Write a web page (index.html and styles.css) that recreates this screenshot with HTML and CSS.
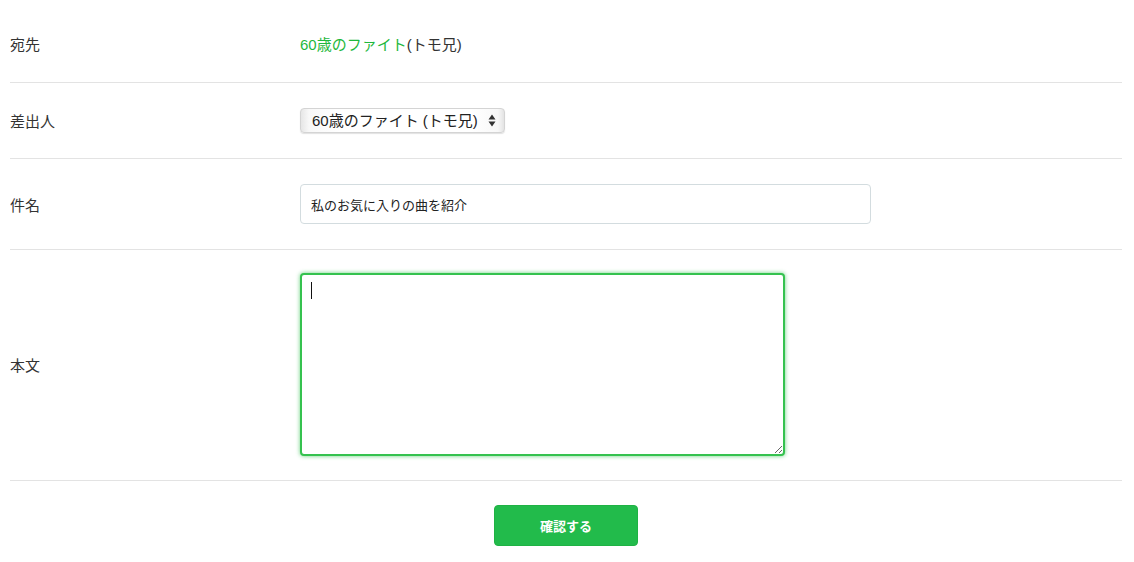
FILE: index.html
```html
<!DOCTYPE html>
<html lang="ja">
<head>
<meta charset="utf-8">
<title>メッセージ作成</title>
<link rel="stylesheet" href="styles.css">
</head>
<body>
<div class="form">
  <div class="row row-first">
    <div class="label">宛先</div>
    <div class="value"><span class="to-name">60歳のファイト</span>(トモ兄)</div>
  </div>
  <div class="row">
    <div class="label">差出人</div>
    <div class="value">
      <div class="select-wrap">
        <select class="select">
          <option>60歳のファイト (トモ兄)</option>
        </select>
        <svg class="select-arrows" width="8" height="13" viewBox="0 0 8 13"><path d="M4 0.5 L7.5 5.5 H0.5 Z M4 12.5 L7.5 7.5 H0.5 Z" fill="#333"/></svg>
      </div>
    </div>
  </div>
  <div class="row">
    <div class="label">件名</div>
    <div class="value"><input class="text-input" type="text" value="私のお気に入りの曲を紹介"></div>
  </div>
  <div class="row row-body">
    <div class="label">本文</div>
    <div class="value">
      <div class="textarea-wrap">
        <textarea class="textarea"></textarea>
        <span class="caret"></span>
      </div>
    </div>
  </div>
  <div class="actions">
    <button class="submit" type="button">確認する</button>
  </div>
</div>
</body>
</html>
```

FILE: styles.css
```css
html, body {
  margin: 0;
  padding: 0;
  background: #fff;
}
body {
  font-family: "Liberation Sans", "Noto Sans CJK JP", sans-serif;
  font-size: 15px;
  color: #333;
}
.form {
  margin: 0 12px 0 10px;
  padding-top: 8px;
}
.row {
  display: grid;
  grid-template-columns: 290px 1fr;
  align-items: center;
  padding: 25px 0;
  border-bottom: 1px solid #e3e3e3;
}
.row-first {
  line-height: 24px;
}
.row-body {
  padding: 23px 0 24px;
}
.label {
  color: #333;
}
.to-name {
  color: #1fb83d;
}
.select-wrap {
  position: relative;
  display: inline-block;
  vertical-align: top;
}
.select {
  appearance: none;
  -webkit-appearance: none;
  width: 205px;
  height: 25px;
  margin: 0;
  padding: 0 0 0 11px;
  font-family: "Liberation Sans", "Noto Sans CJK JP", sans-serif;
  font-size: 15px;
  color: #222;
  border: 1px solid #d4d4d4;
  border-radius: 4px;
  background: linear-gradient(to right, #e6e6e6 0, #f8f8f8 8px, #ffffff 40px, #ffffff 170px, #f8f8f8 197px, #e3e3e3 100%);
  box-shadow: 0 1px 1px rgba(0,0,0,0.12);
}
.select-arrows {
  position: absolute;
  right: 9px;
  top: 6px;
  pointer-events: none;
}
.text-input {
  box-sizing: border-box;
  width: 571px;
  height: 40px;
  margin: 0;
  padding: 0 10px;
  font-family: "Liberation Sans", "Noto Sans CJK JP", sans-serif;
  font-size: 13px;
  color: #222;
  border: 1px solid #d3dcdf;
  border-radius: 4px;
  background: #fff;
  outline: none;
  display: block;
}
.textarea-wrap {
  position: relative;
  width: 485px;
  height: 183px;
}
.textarea {
  box-sizing: border-box;
  width: 485px;
  height: 183px;
  margin: 0;
  padding: 8px 10px;
  border: 2px solid #35c24f;
  border-radius: 4px;
  box-shadow: 0 0 4px rgba(40, 190, 70, 0.7);
  outline: none;
  resize: both;
  caret-color: transparent;
  font-family: "Liberation Sans", "Noto Sans CJK JP", sans-serif;
  font-size: 13px;
  display: block;
}
.caret {
  position: absolute;
  left: 11px;
  top: 9px;
  width: 1px;
  height: 17px;
  background: #111;
}
.actions {
  display: flex;
  justify-content: center;
  padding-top: 24px;
}
.submit {
  width: 144px;
  height: 41px;
  border: 1px solid #1fb244;
  border-radius: 4px;
  background: #22bb4b;
  color: #fff;
  font-family: "Liberation Sans", "Noto Sans CJK JP", sans-serif;
  font-size: 13px;
  font-weight: bold;
  cursor: pointer;
}
```
